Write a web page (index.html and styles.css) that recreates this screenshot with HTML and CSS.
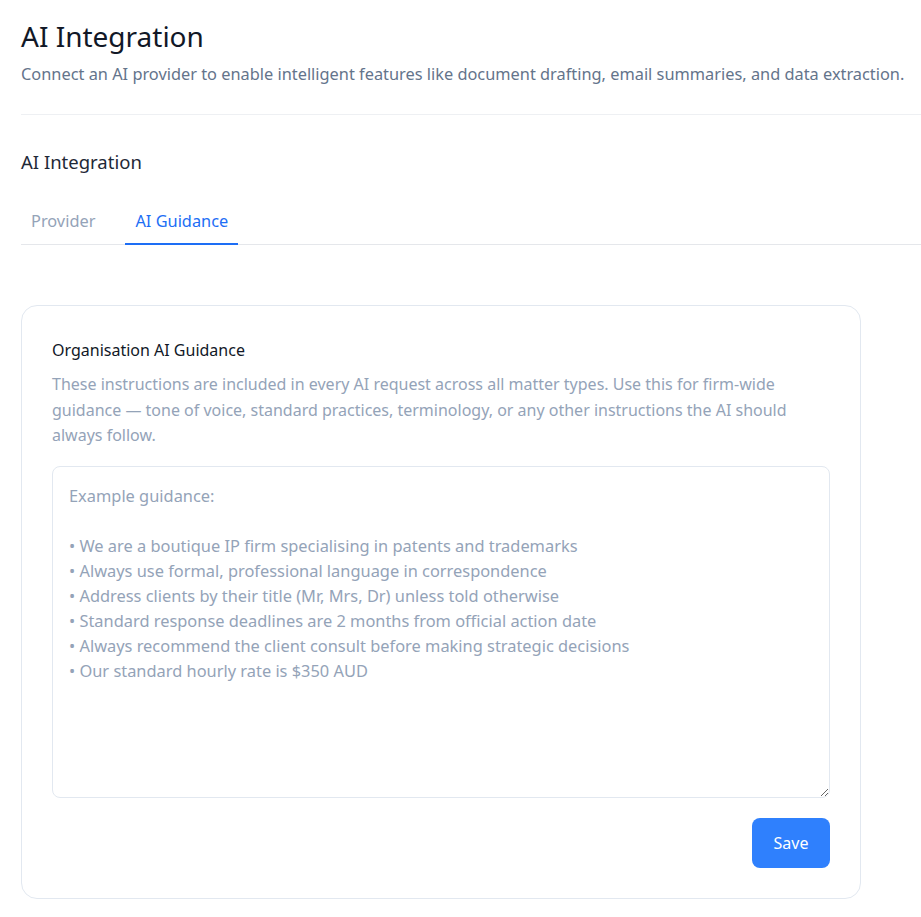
FILE: index.html
```html
<!DOCTYPE html>
<html lang="en">
<head>
    <meta charset="UTF-8">
    <meta name="viewport" content="width=device-width, initial-scale=1.0">
    <title>AI Integration</title>
    <link rel="stylesheet" href="styles.css">
</head>
<body>
    <div class="page">
        <header class="page-header">
            <h1>AI Integration</h1>
            <p>Connect an AI provider to enable intelligent features like document drafting, email summaries, and data extraction.</p>
        </header>

        <section class="settings">
            <h2>AI Integration</h2>

            <!-- Tabs -->
            <div class="tabs">
                <button class="tab">Provider</button>
                <button class="tab active">AI Guidance</button>
            </div>

            <div class="card">
                <h3>Organisation AI Guidance</h3>
                <p class="hint">These instructions are included in every AI request across all matter types. Use this for firm-wide guidance — tone of voice, standard practices, terminology, or any other instructions the AI should always follow.</p>
                <textarea class="guidance" placeholder="Example guidance:

• We are a boutique IP firm specialising in patents and trademarks
• Always use formal, professional language in correspondence
• Address clients by their title (Mr, Mrs, Dr) unless told otherwise
• Standard response deadlines are 2 months from official action date
• Always recommend the client consult before making strategic decisions
• Our standard hourly rate is $350 AUD"></textarea>
                <div class="actions">
                    <button class="save-btn">Save</button>
                </div>
            </div>
        </section>
    </div>
</body>
</html>
```

FILE: styles.css
```css
body {
    margin: 0;
    font-family: "Noto Sans", "Open Sans", sans-serif;
    background: #fff;
    color: #1e293b;
}
.page {
    padding: 14px 0 0 21px;
}
.page-header {
    padding-bottom: 28px;
    border-bottom: 1px solid #eef0f3;
}
.page-header h1 {
    margin: 0;
    font-size: 28px;
    font-weight: 400;
    line-height: 44px;
    color: #111827;
}
.page-header p {
    margin: 4px 0 0;
    font-size: 16.35px;
    line-height: 24px;
    color: #64748b;
}
.settings h2 {
    margin: 34px 0 0;
    font-size: 18.5px;
    font-weight: 400;
    line-height: 26px;
    color: #1f2937;
}
.tabs {
    display: flex;
    gap: 20px;
    margin-top: 27px;
    border-bottom: 1px solid #e5e7eb;
}
.tab {
    background: none;
    border: none;
    border-bottom: 2px solid transparent;
    margin-bottom: -1px;
    padding: 8px 10px 11px;
    font-family: inherit;
    font-size: 16.35px;
    line-height: 22px;
    color: #94a3b8;
    cursor: pointer;
}
.tab.active {
    color: #1d6ef5;
    border-bottom-color: #1d6ef5;
}
.card {
    width: 778px;
    margin-top: 60px;
    padding: 30px;
    border: 1px solid #e2e8f0;
    border-radius: 16px;
}
.card h3 {
    margin: 0;
    font-size: 16px;
    font-weight: 400;
    line-height: 28px;
    color: #111827;
}
.hint {
    margin: 8px 0 17px;
    font-size: 16px;
    line-height: 25.5px;
    color: #94a3b8;
}
.guidance {
    display: block;
    box-sizing: border-box;
    width: 100%;
    height: 332px;
    padding: 16px;
    border: 1px solid #e2e8f0;
    border-radius: 8px;
    font-family: inherit;
    font-size: 16.4px;
    line-height: 25px;
    color: #334155;
    resize: vertical;
}
.guidance::placeholder {
    color: #94a3b8;
}
.actions {
    display: flex;
    justify-content: flex-end;
    margin-top: 20px;
}
.save-btn {
    background: #2f80fd;
    color: #fff;
    border: none;
    border-radius: 8px;
    width: 78px;
    height: 50px;
    font-family: inherit;
    font-size: 16px;
    cursor: pointer;
}
```
